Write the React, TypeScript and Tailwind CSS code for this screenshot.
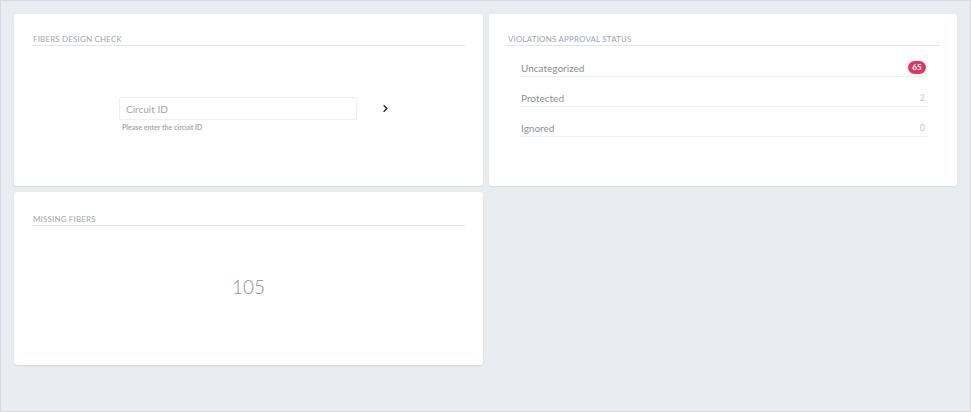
import { ChevronRight } from 'lucide-react';

const font = { fontFamily: 'Lato, "Open Sans", sans-serif' };

function CardTitle({ children }: { children: string }) {
  return (
    <div className="border-b border-[#e3e6ea]">
      <h2 className="text-[8px] leading-[11px] uppercase tracking-[0.02em] text-[#a2a6ae] pl-[1px]">
        {children}
      </h2>
    </div>
  );
}

const statuses = [
  { label: 'Uncategorized', count: 65, highlight: true },
  { label: 'Protected', count: 2 },
  { label: 'Ignored', count: 0 }
];

export default function App() {
  return (
    <div
      className="w-[971px] h-[412px] bg-[#e9ecf0] border border-[#d7dade] px-[13px] pt-[13px]"
      style={font}
    >
      <div className="grid grid-cols-[469px_468px] grid-rows-[172px_173px] gap-[6px]">
        {/* Fibers design check */}
        <div className="bg-white rounded-[3px] shadow-[0_1px_2px_rgba(0,0,0,0.08)] pt-[20px] pl-[18px] pr-[18px]">
          <CardTitle>Fibers Design Check</CardTitle>
          <div className="pl-[87px] pt-[51px]">
            <div className="flex items-center">
              <input
                placeholder="Circuit ID"
                className="w-[238px] h-[23px] border border-[#eef0f3] rounded-[2px] px-[6px] text-[10px] text-[#555] placeholder:text-[#a3a5aa] outline-none"
                style={font}
              />
              <button className="ml-[22px] w-[12px] h-[12px] flex items-center justify-center text-[#2b2f36]">
                <ChevronRight className="w-[11px] h-[11px]" strokeWidth={3.5} />
              </button>
            </div>
            <p className="text-[7px] leading-[10px] font-bold text-[#a7aab1] pl-[3px] pt-[2px]">
              Please enter the circuit ID
            </p>
          </div>
        </div>

        {/* Violations approval status */}
        <div className="bg-white rounded-[3px] shadow-[0_1px_2px_rgba(0,0,0,0.08)] pt-[20px] pl-[18px] pr-[17px]">
          <CardTitle>Violations Approval Status</CardTitle>
          <ul className="pl-[13px] pr-[12px] mt-[1px]">
            {statuses.map(s => (
              <li
                key={s.label}
                className="h-[30px] flex items-end justify-between border-b border-[#eef0f2] pb-[1px] leading-[14px]"
              >
                <span className="text-[10px] text-[#8c9097] pl-[1px]">{s.label}</span>
                {s.highlight ? (
                  <span className="mr-[2px] mb-[1px] h-[13px] min-w-[18px] px-[4px] rounded-full bg-[#e2365e] text-white text-[8px] font-bold leading-[13px] text-center">
                    {s.count}
                  </span>
                ) : (
                  <span className="mr-[3px] text-[9px] text-[#c6c8cc]">{s.count}</span>
                )}
              </li>
            ))}
          </ul>
        </div>

        {/* Missing fibers */}
        <div className="bg-white rounded-[3px] shadow-[0_1px_2px_rgba(0,0,0,0.08)] pt-[22px] pl-[18px] pr-[18px] flex flex-col">
          <CardTitle>Missing Fibers</CardTitle>
          <div className="flex-1 flex items-center justify-center pb-[16px]">
            <span className="text-[19px] font-light text-[#8e9298]">105</span>
          </div>
        </div>
      </div>
    </div>
  );
}
